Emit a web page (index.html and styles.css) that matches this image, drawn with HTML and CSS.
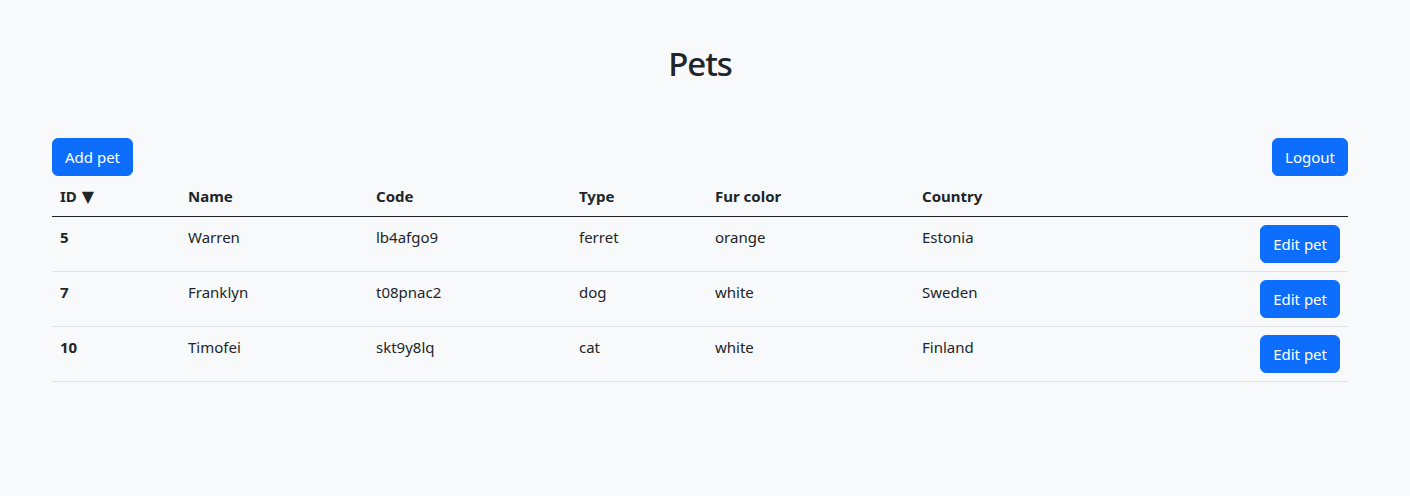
FILE: index.html
```html
<!DOCTYPE html>
<html lang="en">
<head>
<meta charset="utf-8">
<title>Pets</title>
<link rel="stylesheet" href="styles.css">
</head>
<body>
<div class="page">
  <h1 class="title">Pets</h1>
  <div class="toolbar">
    <button class="btn">Add pet</button>
    <button class="btn">Logout</button>
  </div>
  <table class="table">
    <colgroup>
      <col class="c-id"><col class="c-name"><col class="c-code"><col class="c-type"><col class="c-fur"><col class="c-country"><col class="c-act">
    </colgroup>
    <thead>
      <tr>
        <th>ID <span class="sort">&#9660;</span></th>
        <th>Name</th>
        <th>Code</th>
        <th>Type</th>
        <th>Fur color</th>
        <th>Country</th>
        <th></th>
      </tr>
    </thead>
    <tbody>
      <tr>
        <th>5</th><td>Warren</td><td>lb4afgo9</td><td>ferret</td><td>orange</td><td>Estonia</td>
        <td class="act"><button class="btn">Edit pet</button></td>
      </tr>
      <tr>
        <th>7</th><td>Franklyn</td><td>t08pnac2</td><td>dog</td><td>white</td><td>Sweden</td>
        <td class="act"><button class="btn">Edit pet</button></td>
      </tr>
      <tr>
        <th>10</th><td>Timofei</td><td>skt9y8lq</td><td>cat</td><td>white</td><td>Finland</td>
        <td class="act"><button class="btn">Edit pet</button></td>
      </tr>
    </tbody>
  </table>
</div>
</body>
</html>
```
FILE: styles.css
```css
* { box-sizing: border-box; }
html, body {
  margin: 0;
  background: #f8f9fa;
  color: #212529;
  font-family: "Segoe UI", "Noto Sans", "Open Sans", sans-serif;
  font-size: 15px;
  line-height: 24px;
}
.page {
  width: 1296px;
  margin-left: 52px;
  padding-top: 40px;
}
.title {
  margin: 0 0 50px;
  text-align: center;
  font-size: 33px;
  font-weight: 500;
  letter-spacing: -1px;
  line-height: 48px;
}
.toolbar {
  display: flex;
  justify-content: space-between;
}
.btn {
  font-family: inherit;
  font-size: 15px;
  line-height: 24px;
  color: #fff;
  background: #0d6efd;
  border: 1px solid #0d6efd;
  border-radius: 6px;
  padding: 6px 12px;
  cursor: pointer;
}
.table {
  width: 100%;
  border-collapse: collapse;
  table-layout: fixed;
}
.table th, .table td {
  padding: 8px;
  height: 40px;
  text-align: left;
  vertical-align: top;
  font-size: 15px;
  line-height: 24px;
}
.table th { font-weight: 700; }
.sort {
  font-family: "DejaVu Sans", sans-serif;
  font-size: 16px;
  font-weight: 400;
  line-height: 0;
  margin-left: 1px;
}
.table thead tr { border-bottom: 1px solid #212529; }
.table tbody tr { border-bottom: 1px solid #dee2e6; }
.table td.act { text-align: right; }
.c-id { width: 128px; }
.c-name { width: 188px; }
.c-code { width: 203px; }
.c-type { width: 136px; }
.c-fur { width: 207px; }
.c-country { width: 338px; }
.c-act { width: 96px; }
```
